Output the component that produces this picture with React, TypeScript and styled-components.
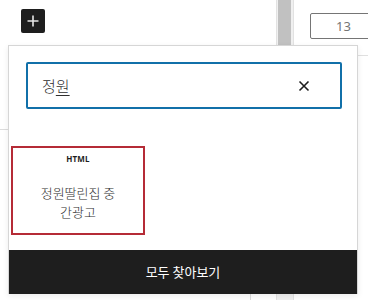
import React from "react";
import styled, { createGlobalStyle } from "styled-components";

const GlobalStyle = createGlobalStyle`
  html, body {
    margin: 0;
    padding: 0;
    background: #fff;
  }
  body {
    font-family: "Noto Sans", "Noto Sans CJK KR", sans-serif;
    color: #1e1e1e;
  }
`;

const Page = styled.div`
  position: relative;
  display: flex;
  width: 368px;
  height: 300px;
  overflow: hidden;
  background: #fff;
`;

const Canvas = styled.div`
  width: 276px;
  flex-shrink: 0;
  display: flex;
  flex-direction: column;
`;

const Toolbar = styled.div`
  height: 129px;
  padding: 9px 0 0 21px;
  box-sizing: border-box;
`;

const InserterToggle = styled.button`
  width: 24px;
  height: 24px;
  padding: 0;
  border: none;
  border-radius: 2px;
  background: #1e1e1e;
  color: #e8e8e8;
  display: flex;
  align-items: center;
  justify-content: center;
`;

const CanvasBlock = styled.div`
  flex: 1;
  width: 250px;
  border-top: 1px solid #dcdcdc;
  border-right: 1px solid #dcdcdc;
`;

const Gutter = styled.div`
  width: 18px;
  flex-shrink: 0;
  box-sizing: border-box;
  background: #f0f0f0;
  border-left: 1px solid #e2e2e2;
  border-right: 1px solid #e2e2e2;
  padding: 0 2px 0 1px;
`;

const Thumb = styled.div`
  height: 200px;
  background: #c1c1c1;
`;

const Sidebar = styled.div`
  flex: 1;
  display: flex;
  flex-direction: column;
`;

const SidebarRow = styled.div`
  height: 56px;
  padding: 13px 0 0 16px;
  box-sizing: border-box;
  border-bottom: 1px solid #e0e0e0;
`;

const NumberField = styled.div`
  width: 80px;
  height: 26px;
  box-sizing: border-box;
  border: 1px solid #757575;
  border-radius: 2px;
  font-size: 13px;
  color: #757575;
  line-height: 24px;
  padding-left: 25px;
`;

const Popover = styled.div`
  position: absolute;
  left: 8px;
  top: 45px;
  width: 350px;
  height: 249px;
  box-sizing: border-box;
  background: #fff;
  border: 1px solid #d6d6d6;
  border-bottom: none;
  box-shadow: 0 2px 6px rgba(0, 0, 0, 0.08);
  display: flex;
  flex-direction: column;
`;

const SearchWrap = styled.div`
  padding: 16px 15px 0 17px;
`;

const SearchBox = styled.div`
  height: 47px;
  box-sizing: border-box;
  border: 2px solid #1170a9;
  border-radius: 2px;
  display: flex;
  align-items: center;
  padding: 0 30px 0 14px;
`;

const SearchText = styled.span`
  flex: 1;
  font-family: "Noto Sans CJK KR", sans-serif;
  font-size: 15px;
  font-weight: 300;
  color: #2f2f2f;
  u {
    text-decoration-thickness: 1px;
    text-underline-offset: 3px;
  }
`;

const ClearButton = styled.span`
  display: flex;
  color: #1e1e1e;
`;

const BlockList = styled.div`
  flex: 1;
  padding: 37px 0 0 2px;
  display: grid;
  grid-template-columns: 134px;
  align-content: start;
`;

const BlockCard = styled.div<{ $active?: boolean }>`
  height: 89px;
  box-sizing: border-box;
  border: 2px solid ${({ $active }) => ($active ? "#b52b36" : "transparent")};
  display: flex;
  flex-direction: column;
  align-items: center;
  padding: 5px 8px 0;
`;

const BlockIcon = styled.div`
  font-family: "Noto Sans", sans-serif;
  font-size: 8px;
  font-weight: 700;
  letter-spacing: 0.2px;
  color: #1e1e1e;
  height: 12px;
  line-height: 12px;
`;

const BlockTitle = styled.div`
  margin-top: 18px;
  font-family: "Noto Sans CJK KR", sans-serif;
  font-size: 13px;
  font-weight: 300;
  line-height: 19px;
  text-align: center;
  color: #2f2f2f;
`;

const BrowseAll = styled.button`
  height: 44px;
  border: none;
  background: #1e1e1e;
  color: #fff;
  font-family: "Noto Sans CJK KR", sans-serif;
  font-size: 13px;
  padding: 0 0 2px;
`;

export default function App() {
  return (
    <>
      <GlobalStyle />
      <Page>
        <Canvas>
          <Toolbar>
            <InserterToggle aria-label="블록 추가">
              <svg width="16" height="16" viewBox="0 0 16 16">
                <path d="M8 2.5v11M2.5 8h11" stroke="currentColor" strokeWidth="1.6" />
              </svg>
            </InserterToggle>
          </Toolbar>
          <CanvasBlock />
        </Canvas>
        <Gutter>
          <Thumb />
        </Gutter>
        <Sidebar>
          <SidebarRow>
            <NumberField>13</NumberField>
          </SidebarRow>
        </Sidebar>
        <Popover>
          <SearchWrap>
            <SearchBox>
              <SearchText>
                정<u>원</u>
              </SearchText>
              <ClearButton>
                <svg width="12" height="12" viewBox="0 0 12 12">
                  <path d="M1.5 1.5l9 9M10.5 1.5l-9 9" stroke="currentColor" strokeWidth="1.6" />
                </svg>
              </ClearButton>
            </SearchBox>
          </SearchWrap>
          <BlockList>
            <BlockCard $active>
              <BlockIcon>HTML</BlockIcon>
              <BlockTitle>
                정원딸린집 중
                <br />
                간광고
              </BlockTitle>
            </BlockCard>
          </BlockList>
          <BrowseAll>모두 찾아보기</BrowseAll>
        </Popover>
      </Page>
    </>
  );
}
